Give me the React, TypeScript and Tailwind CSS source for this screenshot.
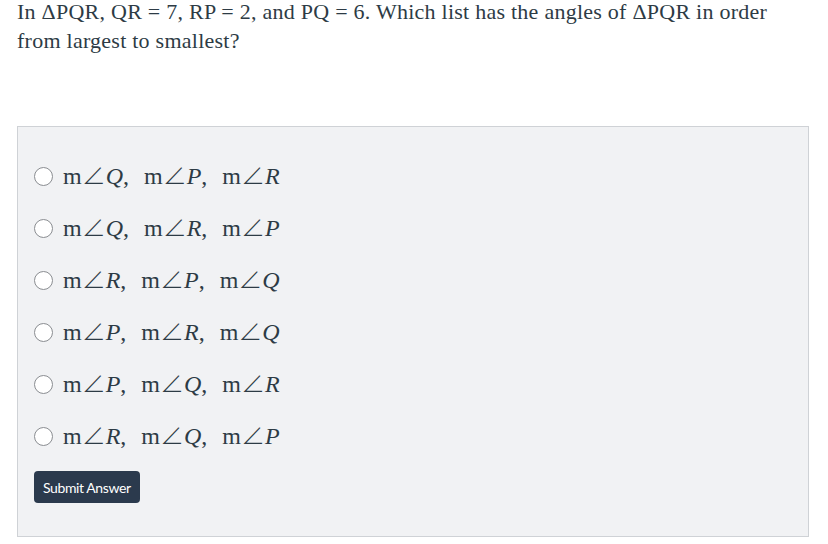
import { useState } from "react";

const options: [string, string, string][] = [
  ["Q", "P", "R"],
  ["Q", "R", "P"],
  ["R", "P", "Q"],
  ["P", "R", "Q"],
  ["P", "Q", "R"],
  ["R", "Q", "P"],
];

function Angle({ v }: { v: string }) {
  return (
    <span>
      m<span className="font-['Noto_Sans_CJK_SC',sans-serif] font-light">∠</span>
      <span className="italic">{v}</span>
    </span>
  );
}

export default function App() {
  const [picked, setPicked] = useState<number | null>(null);

  return (
    <div className="w-[828px] h-[544px] bg-white overflow-hidden pl-[17px] pr-[19px]">
      {/* Question */}
      <p className="text-[22px] leading-[29px] tracking-[0.25px] text-[#2d3b45] font-['Liberation_Serif',serif] -mt-[3px]">
        In ΔPQR, QR = 7, RP = 2, and PQ = 6. Which list has the angles of ΔPQR in order from largest to smallest?
      </p>

      {/* Answer box */}
      <div className="mt-[71px] h-[411px] border border-[#cfd2d6] bg-[#f1f2f4] pl-4 pt-[23px] flex flex-col">
        {options.map((o, i) => (
          <label key={i} className="h-[52px] flex items-center gap-[10px] cursor-pointer">
            <span
              onClick={() => setPicked(i)}
              className="w-[19px] h-[19px] rounded-full border border-[#8a8d91] bg-white flex items-center justify-center shrink-0"
            >
              {picked === i && <span className="w-[9px] h-[9px] rounded-full bg-[#2c3e50]" />}
            </span>
            <span className="text-[24px] leading-[28px] -mt-[2px] text-[#2d3b45] font-['Liberation_Serif',serif] flex gap-[15px]">
              <span>
                <Angle v={o[0]} />,
              </span>
              <span>
                <Angle v={o[1]} />,
              </span>
              <Angle v={o[2]} />
            </span>
          </label>
        ))}
        <button className="mt-[9px] self-start h-8 px-[9px] rounded bg-[#2b3a4d] text-white text-[14px] font-['Lato',sans-serif] tracking-[-0.4px]">
          Submit Answer
        </button>
      </div>
    </div>
  );
}
